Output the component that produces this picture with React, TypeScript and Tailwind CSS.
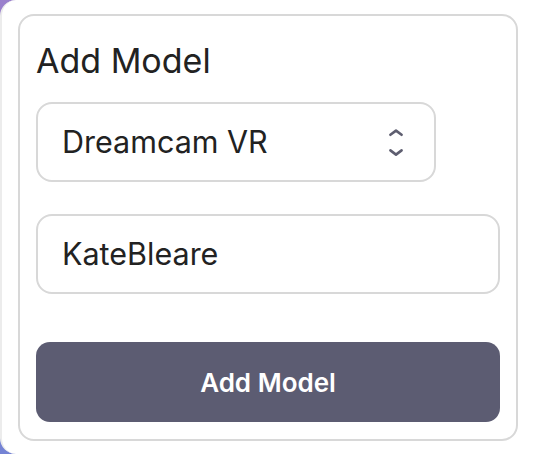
import React from 'react'

const font = { fontFamily: 'Inter, "Noto Sans", sans-serif' }

// Two stacked chevrons drawn to match the native select arrows
const UpDown = () => (
  <svg width="20" height="32" viewBox="0 0 20 32" fill="none" stroke="#5e5e70" strokeWidth="2.6" strokeLinecap="round" strokeLinejoin="round">
    <polyline points="4.4,8.8 10,4.6 15.6,8.8" />
    <polyline points="4.4,24.4 10,28.6 15.6,24.4" />
  </svg>
)

const App = () => {
  return (
    <div className="w-[538px] h-[454px] overflow-hidden bg-gradient-to-b from-[#9a80cc] to-[#7483d4]" style={font}>
      <div className="h-full bg-white rounded-l-[16px] border-l-2 border-[#ececec] pl-[16px] pt-[14px]">
        <div className="w-[500px] h-[427px] rounded-[16px] border-2 border-[#d8d8d8] bg-white pt-[29px] px-4 pb-4">
          <h2 className="text-[34px] leading-[32px] h-[32px] mb-[25px] text-[#222] font-normal">Add Model</h2>

          <div className="w-[400px] h-[80px] rounded-[16px] border-2 border-[#d8d8d8] flex items-center justify-between pl-[24px] pr-[28px]">
            <span className="text-[30.5px] text-[#222]">Dreamcam VR</span>
            <UpDown />
          </div>

          <div className="mt-8 w-full h-[80px] rounded-[16px] border-2 border-[#d8d8d8] flex items-center pl-[24px]">
            <span className="text-[30.5px] text-[#222]">KateBleare</span>
          </div>

          <button className="mt-[48px] w-full h-[80px] rounded-[14px] bg-[#5c5c72] text-white text-[26px] font-semibold">
            Add Model
          </button>
        </div>
      </div>
    </div>
  )
}

export default App
